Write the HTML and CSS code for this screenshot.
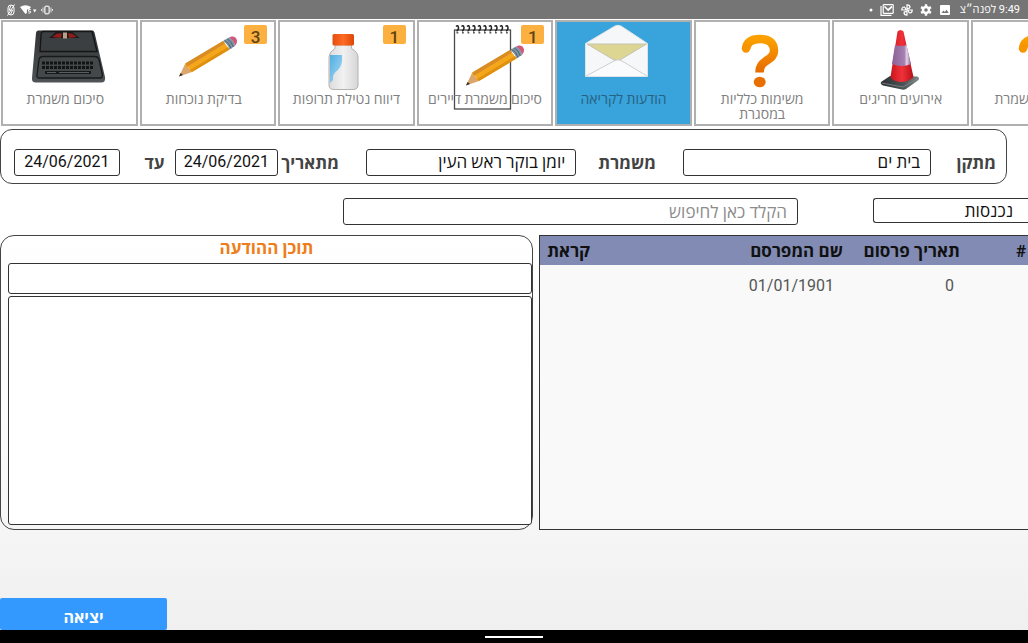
FILE: index.html
```html
<!DOCTYPE html>
<html lang="he">
<head>
<meta charset="utf-8">
<meta name="viewport" content="width=device-width, initial-scale=1">
<title>הודעות לקריאה</title>
<link rel="stylesheet" href="styles.css">
</head>
<body>
<svg class="defs" width="0" height="0" aria-hidden="true">
  <defs>
    <linearGradient id="g-orange" x1="0" y1="0" x2="0" y2="1"><stop offset="0" stop-color="#fba000"/><stop offset="1" stop-color="#e66a00"/></linearGradient>
    <linearGradient id="g-dark" x1="0" y1="0" x2="0" y2="1"><stop offset="0" stop-color="#313436"/><stop offset="1" stop-color="#505355"/></linearGradient>
    <linearGradient id="g-cap" x1="0" y1="0" x2="1" y2="0"><stop offset="0" stop-color="#e2500f"/><stop offset=".5" stop-color="#ff6a24"/><stop offset="1" stop-color="#dc4708"/></linearGradient>
    <linearGradient id="g-glass" x1="0" y1="0" x2="1" y2="0"><stop offset="0" stop-color="#dcdcdc"/><stop offset=".5" stop-color="#f1f1f1"/><stop offset="1" stop-color="#d6d6d6"/></linearGradient>
    <linearGradient id="g-blue" x1="0" y1="0" x2="1" y2="1"><stop offset="0" stop-color="#52aee2"/><stop offset="1" stop-color="#a9daf5"/></linearGradient>
    <linearGradient id="g-cone" x1="0" y1="0" x2="1" y2="0"><stop offset="0" stop-color="#c9141c"/><stop offset=".5" stop-color="#f0323a"/><stop offset="1" stop-color="#b80f18"/></linearGradient>
    <linearGradient id="g-band" x1="0" y1="0" x2="1" y2="0"><stop offset="0" stop-color="#8c5f97"/><stop offset=".65" stop-color="#a580b0"/><stop offset=".78" stop-color="#e4d4e8"/><stop offset="1" stop-color="#8a5f95"/></linearGradient>
    <linearGradient id="g-base" x1="0" y1="0" x2="1" y2="0"><stop offset="0" stop-color="#2b3032"/><stop offset=".6" stop-color="#4d5456"/><stop offset="1" stop-color="#7c8486"/></linearGradient>
    <symbol id="pencil" viewBox="0 0 60 42">
      <path d="M1 40.500 7.300 27.500 14 36z" fill="#dba66b"/>
      <path d="M1 40.500 2.600 37 5 39z" fill="#33302e"/>
      <path d="M7.300 27.500 45 5 51.500 13.500 14 36 11.500 34.500 11 31.500 8 31z" fill="#f5a71c"/>
      <path d="M7.300 27.500 45 5 47 7.500 9.500 30.500z" fill="#d98b25"/>
      <path d="M12 34 50 11 51.500 13.500 14 36z" fill="#e0900f"/>
      <path d="M45 5 51 1.500Q56 3.500 57 10L51.500 13.500Q50 8 45 5z" fill="#7d95a5"/>
      <path d="M46.500 4.200Q51.500 7 53 12.500M49 2.800Q54 5.500 55.300 11" fill="none" stroke="#4f6575" stroke-width="1"/>
      <path d="M51 1.500 53.500.5Q58 0 59 4.500 59.500 7.500 57 10 56 4 51 1.500z" fill="#cf5878"/>
    </symbol>
    <symbol id="question" viewBox="0 0 132 68">
      <path d="M50 26Q51 16 64 16 78 16 78 28C78 38 63.500 36 63.500 49.500" fill="none" stroke="url(#g-orange)" stroke-width="8.500"/>
      <circle cx="50" cy="25.500" r="4.200" fill="#f79400"/>
      <ellipse cx="63.700" cy="59" rx="6" ry="5.300" fill="#e87003"/>
    </symbol>
  </defs>
</svg>

<header class="status">
  <div class="status__group">
    <svg width="10" height="12" viewBox="0 0 10 12" aria-hidden="true"><g fill="none" stroke="#fff" stroke-width="1"><rect x="2" y="1" width="6" height="10" rx="3"/><path d="M5 1.500 3 6h3.500L4.500 10.500M8.500.5 1.500 11.500"/></g></svg>
    <svg width="17" height="10" viewBox="0 0 17 10" aria-hidden="true"><path d="M0 2Q5.500-1.500 11 2L9.500 4 7 4.500 6.800 8 5.500 9z" fill="#fff"/><path d="M10.800 4.500H8.500V6.300Q10.800 5.600 10.800 7.200 10.500 8.500 8.300 8" fill="none" stroke="#fff" stroke-width=".9"/><path d="M13 4.500h3.500L14.700 7.500z" fill="#fff"/></svg>
    <svg width="12" height="10" viewBox="0 0 12 10" aria-hidden="true"><rect x="3.800" y="1.200" width="4.400" height="7.600" rx="1.500" fill="none" stroke="#ddd" stroke-width="1.500"/><path d="M2 2.500v5M10 2.500v5M.5 4v2M11.500 4v2" stroke="#ddd"/></svg>
  </div>
  <div class="status__group status__group--end">
    <svg width="4" height="12" viewBox="0 0 4 12" aria-hidden="true"><circle cx="2" cy="6" r="1.500" fill="#fff"/></svg>
    <svg width="14" height="12" viewBox="0 0 14 12" aria-hidden="true"><path d="M1 2v9.300h10.500" fill="none" stroke="#fff" stroke-width="1.200"/><rect x="3.200" y=".7" width="10" height="8.600" rx=".5" fill="none" stroke="#fff" stroke-width="1.200"/><path d="M4.500 2.500 8.200 6 12 2.500" fill="none" stroke="#fff" stroke-width="1.700"/></svg>
    <svg width="12" height="12" viewBox="0 0 12 12" aria-hidden="true"><g fill="none" stroke="#fff" stroke-width="1.200"><path id="blade" d="M6 6V.8Q9 .8 9 3.200 8.800 4.500 6 4.700z"/><use href="#blade" transform="rotate(90 6 6)"/><use href="#blade" transform="rotate(180 6 6)"/><use href="#blade" transform="rotate(270 6 6)"/></g></svg>
    <svg width="12" height="12" viewBox="0 0 12 12" aria-hidden="true"><circle cx="6" cy="6" r="3" fill="none" stroke="#fff" stroke-width="2.400"/><path d="M6 .3v2M6 9.700v2M1.060 3.150l1.740 1M9.200 7.850l1.740 1M1.060 8.850l1.740-1M9.200 4.150l1.740-1" stroke="#fff" stroke-width="2.400"/></svg>
    <svg width="12" height="12" viewBox="0 0 12 12" aria-hidden="true"><rect x="1" y="1" width="10" height="10" rx="1" fill="#fff"/><path d="M2.500 9 4.500 6.500 5.800 8 7.500 5.700 9.700 9z" fill="#757575"/></svg>
    <time class="status__time" dir="rtl">9:49 לפנה״צ</time>
  </div>
</header>

<nav class="tiles">
  <button class="tile" type="button">
    <svg class="tile__art" viewBox="0 0 132 68" aria-hidden="true">
      <path d="M35 7.500H89Q91 7.500 91.500 9.500L102 54Q103 59.500 98 59.500H33Q28.500 59.500 29 55L33 10Q33.300 7.500 35 7.500z" fill="url(#g-dark)"/>
      <path d="M39.500 8.500H89L94 28.500H37L38 13Q38 9.500 39.500 8.500z" fill="#3c3f41" stroke="#141516" stroke-width="1.300"/>
      <path d="M46 15 53 9H69.500L76.500 15z" fill="#191a1b"/><path d="M49 14 54 10.500H59L58 15zM65 10.500h4L74 14 66 15z" fill="#8f1d1b"/><path d="M60 9.500h4v6h-4z" fill="#b9a186"/>
      <path d="M40 33.500H92Q95 33.500 96 36.500L99.500 52Q99.500 55 97 55H36Q33.500 55 34 52L36 37Q36.500 33.500 40 33.500z" fill="#45484a" stroke="#17191a" stroke-width="1.300"/>
      <path d="M39 40H90M39 44.500H91" stroke="#131415" stroke-width="3" stroke-dasharray="3 1"/>
      <path d="M42 49.500H88" stroke="#17191a" stroke-width="3"/><path d="M44 49.500H53M56 49.500H86" stroke="#5b5e60" stroke-width="1"/>
    </svg>
    <span class="tile__label tile__label--inset">סיכום משמרת</span>
  </button>
  <button class="tile" type="button">
    <svg class="tile__art" viewBox="0 0 132 68" aria-hidden="true"><use href="#pencil" x="36" y="13" width="60" height="42"/></svg>
    <span class="tile__label tile__label--inset">בדיקת נוכחות</span>
    <span class="tile__badge">3</span>
  </button>
  <button class="tile" type="button">
    <svg class="tile__art" viewBox="0 0 132 68" aria-hidden="true">
      <path d="M55 22H71.500V25.500Q78 29 78 34V62Q78 66.500 73 66.500H54Q49 66.500 49 62V34Q49 29 55 25.500z" fill="url(#g-glass)" stroke="#b5b2ae"/>
      <path d="M50 32H62Q63 42 58 47 52 51 53 57L50 60z" fill="url(#g-blue)"/>
      <rect x="52.500" y="11" width="21.500" height="11.500" rx="1.500" fill="url(#g-cap)"/>
    </svg>
    <span class="tile__label">דיווח נטילת תרופות</span>
    <span class="tile__badge">1</span>
  </button>
  <button class="tile" type="button">
    <svg class="tile__art" viewBox="0 0 132 68" aria-hidden="true">
      <rect x="35.500" y="7" width="56" height="79" fill="#fff" stroke="#4b4b4b" stroke-width="1.300"/>
      <path d="M37 3.500Q39 1.500 39.500 4.500 39.500 7.500 37.500 8M42.500 3.500Q44.500 1.500 45 4.500 45 7.500 43 8M48 3.500Q50 1.500 50.500 4.500 50.500 7.500 48.500 8M53.500 3.500Q55.500 1.500 56 4.500 56 7.500 54 8M59 3.500Q61 1.500 61.500 4.500 61.500 7.500 59.500 8M64.500 3.500Q66.500 1.500 67 4.500 67 7.500 65 8M70 3.500Q72 1.500 72.500 4.500 72.500 7.500 70.500 8M75.500 3.500Q77.500 1.500 78 4.500 78 7.500 76 8M81 3.500Q83 1.500 83.500 4.500 83.500 7.500 81.500 8M86.500 3.500Q88.500 1.500 89 4.500 89 7.500 87 8" fill="none" stroke="#222" stroke-width="1.500"/>
      <path d="M37.500 9.800H90" stroke="#555" stroke-width="1.600" stroke-dasharray="1.800 3.700"/>
      <use href="#pencil" x="46" y="22" width="60" height="42"/>
    </svg>
    <span class="tile__label">סיכום משמרת דיירים</span>
    <span class="tile__badge">1</span>
  </button>
  <button class="tile tile--active" type="button" aria-current="page">
    <svg class="tile__art" viewBox="0 0 132 68" aria-hidden="true">
      <path d="M27.500 20.500 57 3Q60 1.500 63 3L89.500 20.500V53.500H27.500z" fill="#f6f7f8" stroke="#dfe3e6"/>
      <path d="M29 21H88.500L62 37H56z" fill="#ddd592" stroke="#c5c4b4"/>
      <path d="M28 53 56 38Q60 35.500 64 38L89 53" fill="#fafbfc" stroke="#ccd0d3"/>
    </svg>
    <span class="tile__label">הודעות לקריאה</span>
  </button>
  <button class="tile" type="button">
    <svg class="tile__art" viewBox="0 0 132 68" aria-hidden="true"><use href="#question"/></svg>
    <span class="tile__label">משימות כלליות<br>במסגרת</span>
  </button>
  <button class="tile" type="button">
    <svg class="tile__art" viewBox="0 0 132 68" aria-hidden="true">
      <path d="M46 59 55 53 82 53.500Q85 54.500 83.500 57L71 66Q69.500 67 67 66.500L48 62.500Q45 61 46 59z" fill="url(#g-base)"/>
      <path d="M46.500 60 68 64 83.500 55" fill="none" stroke="#8a9193" stroke-width=".7"/>
      <path d="M62.500 8.500Q65.500 5.500 68.500 8.500L78.500 54Q73 59.500 65 59 57 58 55.500 54z" fill="url(#g-cone)"/>
      <path d="M60 22Q66 24 71.500 22L76 41Q67 45 57 41z" fill="url(#g-band)"/>
    </svg>
    <span class="tile__label">אירועים חריגים</span>
  </button>
  <button class="tile" type="button">
    <svg class="tile__art" viewBox="0 0 132 68" aria-hidden="true"><use href="#question"/></svg>
    <span class="tile__label">משימות משמרת</span>
  </button>
</nav>

<main class="page">
  <form class="filters">
    <input class="field field--date" id="to" type="text" value="24/06/2021">
    <label class="filters__label filters__label--near" for="to">עד</label>
    <input class="field field--date" id="from" type="text" value="24/06/2021">
    <label class="filters__label" for="from">מתאריך</label>
    <select class="field" id="shift" dir="rtl"><option>יומן בוקר ראש העין</option></select>
    <label class="filters__label" for="shift">משמרת</label>
    <select class="field" id="site" dir="rtl"><option>בית ים</option></select>
    <label class="filters__label filters__label--near" for="site">מתקן</label>
  </form>

  <div class="search">
    <input class="field search__text" type="search" dir="rtl" placeholder="הקלד כאן לחיפוש" aria-label="חיפוש">
    <select class="field search__box" dir="rtl" aria-label="תיבה"><option>נכנסות</option></select>
  </div>

  <div class="work">
    <section class="message">
      <h2 class="message__title" dir="rtl">תוכן ההודעה</h2>
      <input class="field message__subject" type="text" dir="rtl" aria-label="נושא">
      <textarea class="field message__body" dir="rtl" aria-label="תוכן"></textarea>
    </section>
    <section class="inbox">
      <table class="inbox__table" dir="rtl">
        <thead><tr><th class="col-num">#</th><th class="col-date">תאריך פרסום</th><th>שם המפרסם</th><th class="col-read">קראת</th></tr></thead>
        <tbody><tr><td></td><td>0</td><td class="inbox__name">01/01/1901</td><td></td></tr></tbody>
      </table>
    </section>
  </div>

  <button class="exit" type="button">יציאה</button>
</main>

<footer class="navbar"><span class="navbar__handle"></span></footer>
</body>
</html>
```

FILE: styles.css
```css
* { box-sizing: border-box; }

body {
  margin: 0;
  min-height: 100vh;
  display: flex;
  flex-direction: column;
  overflow-x: hidden;
  font-family: Roboto, "Open Sans", "Noto Sans", sans-serif;
  font-size: 17px;
  color: #111;
  background: linear-gradient(#fff 35%, #fafafa 70%, #efefef);
}

button, input, select, textarea { font: inherit; color: inherit; }

.defs { position: absolute; }

/* Status bar */
.status {
  display: flex;
  justify-content: space-between;
  align-items: center;
  height: 19px;
  padding: 0 8px 0 6px;
  background: #757575;
  color: #fff;
}
.status__group { display: flex; align-items: center; gap: 4px; }
.status__group--end { gap: 7px; }
.status__time { padding-left: 2px; font-size: 11px; line-height: 18px; }

/* Tile strip */
.tiles {
  display: grid;
  grid-auto-flow: column;
  grid-auto-columns: 13.3%;
  gap: 2px;
  padding: 1px 0 3px 1px;
  overflow: hidden;
}
.tile {
  position: relative;
  display: flex;
  flex-direction: column;
  align-items: center;
  gap: 1px;
  min-height: 106px;
  padding: 1px 0 0;
  border: 2px solid #b0b0b0;
  background: #fff;
  color: #808080;
}
.tile--active { background: #39a3dc; color: #27627f; }
.tile__art { flex: none; width: 132px; height: 68px; overflow: visible; }
.tile__label {
  direction: rtl;
  position: relative;
  font-size: 14px;
  line-height: 15px;
  text-align: center;
}
.tile__label--inset { padding-right: 8px; }
.tile__badge {
  position: absolute;
  top: 3px;
  right: 7px;
  width: 23px;
  height: 19px;
  border-radius: 2px;
  background: #fbb040;
  color: #5f4314;
  font-size: 17px;
  font-weight: 500;
  line-height: 24px;
  text-align: center;
}

/* Shared form field */
.field {
  width: 100%;
  min-width: 0;
  height: 27px;
  margin: 0;
  padding: 0 10px;
  border: 1px solid #333;
  border-radius: 3px;
  background: #fff;
  appearance: none;
  outline: none;
}
.field::placeholder { color: #8c8c8c; opacity: 1; }

.page { flex: 1; display: flex; flex-direction: column; }

.filters {
  display: grid;
  grid-template-columns: 106fr 55fr 104fr 88fr 211fr 107fr 249fr 75fr;
  align-items: center;
  margin-right: 21px;
  padding: 19px 0 7px 13px;
  border: 1px solid #444;
  border-radius: 12px;
}
.filters__label {
  direction: rtl;
  padding-right: 27px;
  color: #444;
  font-weight: 700;
  line-height: 22px;
  white-space: nowrap;
}
.filters__label--near { padding-right: 10px; }
.filters .field { height: 27px; padding-bottom: 2px; }
.filters .field--date { padding: 0 0 2px; font-size: 16px; text-align: center; }

.search {
  display: grid;
  grid-template-columns: 455fr 155fr;
  gap: 75px;
  padding: 14px 0 10px 343px;
}
.search__box { height: 25px; padding-right: 15px; border-right: 0; border-radius: 3px 0 0 3px; }

.work {
  flex: 1;
  display: grid;
  grid-template-columns: 533fr 489fr;
  gap: 6px;
}
.message {
  display: flex;
  flex-direction: column;
  gap: 2px;
  padding: 0 0 4px 7px;
  border: 1px solid #444;
  border-radius: 14px;
}
.message__title {
  margin: 0;
  padding-right: 7px;
  color: #ee7d1a;
  font-size: 17px;
  line-height: 25px;
  text-align: center;
}
.message__subject { height: 31px; }
.message__body { flex: 1; min-height: 160px; padding: 8px 10px; resize: none; }

.inbox {
  border: 1px solid #333;
  border-right: 0;
  background: #f9f9f9;
}
.inbox__table { width: 100%; border-collapse: collapse; table-layout: fixed; }
.inbox__table th {
  height: 29px;
  padding: 0 10px 0 0;
  background: #818bb3;
  color: #111;
  line-height: 20px;
  text-align: right;
  white-space: nowrap;
}
.inbox__table td { height: 41px; padding: 0 16px 0 0; color: #555; font-size: 16px; }
.inbox__table .col-num { width: 58px; padding-right: 2px; }
.col-date { width: 117px; }
.col-read { width: 60px; }
.inbox__table .inbox__name { padding-right: 19px; }

.exit {
  width: 167px;
  height: 32px;
  margin-top: 68px;
  padding: 6px 0 0;
  border: 0;
  border-radius: 2px;
  background: #3399ff;
  color: #fff;
  font-size: 16px;
  font-weight: 700;
}

.navbar {
  display: flex;
  justify-content: center;
  align-items: center;
  height: 13px;
  background: #000;
}
.navbar__handle { width: 58px; height: 2px; background: #fff; }
```
